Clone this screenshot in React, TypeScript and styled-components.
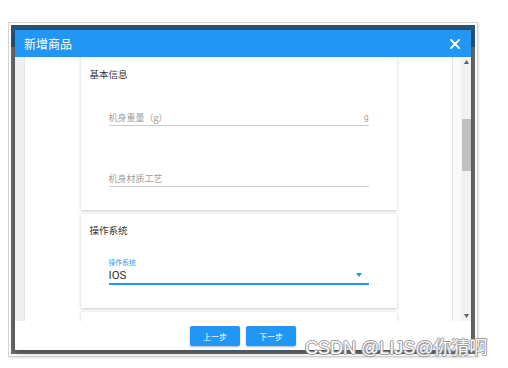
import React from "react";
import styled, { createGlobalStyle } from "styled-components";

const GlobalStyle = createGlobalStyle`
    html, body {
        margin: 0;
        padding: 0;
        background: #ffffff;
    }
    body {
        font-family: "Noto Sans CJK SC", "Noto Sans", sans-serif;
    }
`;

const BLUE = "#2196f3";

const Page = styled.div`
    position: relative;
    width: 508px;
    height: 368px;
    padding: 22px 0 0 8px;
    box-sizing: border-box;
    overflow: hidden;
`;

const Frame = styled.div`
    width: 470px;
    box-sizing: border-box;
    border: 1px solid #d4d4d4;
    padding: 2px;
    background: #ffffff;
    box-shadow: 1px 1px 2px rgba(0, 0, 0, 0.12);
`;

/* 뒤쪽 화면 (dim 처리된 배경) */
const Screen = styled.div`
    padding: 5px 4px 4px 4px;
    background: linear-gradient(#26547c 0, #26547c 22px, #6c6c6c 22px);
`;

const Modal = styled.div`
    display: flex;
    flex-direction: column;
    background: #ffffff;
    box-shadow: 0 2px 6px rgba(0, 0, 0, 0.35);
`;

const Header = styled.div`
    height: 27px;
    display: flex;
    align-items: center;
    justify-content: space-between;
    padding: 0 11px 0 9px;
    background: ${BLUE};
    color: #ffffff;
`;

const Title = styled.div`
    font-size: 12px;
`;

const Close = styled.svg`
    width: 10px;
    height: 10px;
    display: block;
`;

const Body = styled.div`
    display: flex;
    height: 264px;
`;

const Gutter = styled.div<{ $w: number; $side: "left" | "right" }>`
    width: ${p => p.$w}px;
    flex: none;
    background: ${p => (p.$side === "left" ? "#efefef" : "#fafafa")};
    border-${p => (p.$side === "left" ? "right" : "left")}: 1px solid #e6e6e6;
    box-sizing: border-box;
`;

const Viewport = styled.div`
    flex: 1;
    overflow: hidden;
    background: #ffffff;
`;

const Scroller = styled.div`
    display: flex;
    flex-direction: column;
    align-items: center;
    gap: 4px;
    margin-top: -12px; /* scrollTop */
`;

const Card = styled.div<{ $pb: number; $h?: number }>`
    width: 316px;
    background: #ffffff;
    box-shadow: 0 1px 3px rgba(0, 0, 0, 0.22);
    padding-bottom: ${p => p.$pb}px;
    height: ${p => (p.$h ? `${p.$h}px` : "auto")};
    flex: none;
`;

const SectionTitle = styled.div<{ $pt: number }>`
    padding: ${p => p.$pt}px 0 0 9px;
    font-size: 9.5px;
    line-height: 20px;
    color: #333333;
`;

const Field = styled.div<{ $mt: number }>`
    margin: ${p => p.$mt}px 28px 0 28px;
    display: flex;
    justify-content: space-between;
    align-items: center;
    height: 16px;
    border-bottom: 1px solid #cccccc;
    font-size: 9px;
    color: #a0a0a0;
`;

const Suffix = styled.span`
    font-family: "Roboto", "Liberation Sans", sans-serif;
    font-size: 8.5px;
`;

const Select = styled.div<{ $mt: number }>`
    margin: ${p => p.$mt}px 28px 0 28px;
`;

const SelectLabel = styled.div`
    font-size: 6.8px;
    line-height: 10px;
    color: ${BLUE};
`;

const SelectRow = styled.div`
    display: flex;
    align-items: center;
    justify-content: space-between;
    height: 16px;
    padding-right: 7px;
    border-bottom: 2px solid ${BLUE};
    font-family: "Roboto", "Liberation Sans", sans-serif;
    font-size: 11.5px;
    color: #333333;
`;

const Caret = styled.svg`
    width: 6px;
    height: 4px;
    display: block;
`;

const Track = styled.div`
    width: 10px;
    flex: none;
    display: flex;
    flex-direction: column;
    align-items: center;
    background: #f1f1f1;
    padding: 3px 0;
    box-sizing: border-box;
`;

const Arrow = styled.svg`
    width: 5px;
    height: 4px;
    display: block;
    flex: none;
`;

const Thumb = styled.div`
    width: 9px;
    height: 52px;
    margin-top: 55px;
    background: #c1c1c1;
    flex: none;
`;

const Spacer = styled.div`
    flex: 1;
`;

const Footer = styled.div`
    height: 29px;
    display: flex;
    justify-content: center;
    gap: 6px;
    padding-top: 5px;
    box-sizing: border-box;
`;

const Button = styled.button`
    width: 50px;
    height: 20px;
    border: none;
    border-radius: 2px;
    background: ${BLUE};
    color: #ffffff;
    font-family: "Noto Sans CJK SC", sans-serif;
    font-size: 8px;
    padding: 0;
    box-shadow: 0 1px 2px rgba(0, 0, 0, 0.3);
`;

const Watermark = styled.div`
    position: absolute;
    left: 305px;
    top: 337px;
    font-family: "Liberation Sans", "Noto Sans CJK SC", sans-serif;
    font-size: 18px;
    line-height: 22px;
    color: #fafafa;
    white-space: nowrap;
    text-shadow:
        -1px 0 0 #9a9a9a,
        1px 0 0 #9a9a9a,
        0 1px 0 #9a9a9a,
        0 -1px 0 #9a9a9a;
`;

const App = () => {
    return (
        <Page>
            <GlobalStyle />
            <Frame>
                <Screen>
                    <Modal>
                        <Header>
                            <Title>新增商品</Title>
                            <Close viewBox="0 0 10 10">
                                <path d="M1 1 L9 9 M9 1 L1 9" stroke="#ffffff" strokeWidth="1.8" strokeLinecap="square" />
                            </Close>
                        </Header>
                        <Body>
                            <Gutter $w={10} $side="left" />
                            <Viewport>
                                <Scroller>
                                    <Card $pb={23}>
                                        <SectionTitle $pt={19}>基本信息</SectionTitle>
                                        <Field $mt={25}>
                                            <span>机身重量（g）</span>
                                            <Suffix>g</Suffix>
                                        </Field>
                                        <Field $mt={44}>
                                            <span>机身材质工艺</span>
                                        </Field>
                                    </Card>
                                    <Card $pb={23}>
                                        <SectionTitle $pt={6}>操作系统</SectionTitle>
                                        <Select $mt={17}>
                                            <SelectLabel>操作系统</SelectLabel>
                                            <SelectRow>
                                                <span>IOS</span>
                                                <Caret viewBox="0 0 6 4">
                                                    <polygon points="0,0 6,0 3,4" fill={BLUE} />
                                                </Caret>
                                            </SelectRow>
                                        </Select>
                                    </Card>
                                    <Card $pb={0} $h={60} />
                                </Scroller>
                            </Viewport>
                            <Gutter $w={9} $side="right" />
                            <Track>
                                <Arrow viewBox="0 0 5 4">
                                    <polygon points="2.5,0 5,4 0,4" fill="#606060" />
                                </Arrow>
                                <Thumb />
                                <Spacer />
                                <Arrow viewBox="0 0 5 4">
                                    <polygon points="0,0 5,0 2.5,4" fill="#606060" />
                                </Arrow>
                            </Track>
                        </Body>
                        <Footer>
                            <Button>上一步</Button>
                            <Button>下一步</Button>
                        </Footer>
                    </Modal>
                </Screen>
            </Frame>
            <Watermark>CSDN @LIJS@你猜啊</Watermark>
        </Page>
    );
};

export default App;
